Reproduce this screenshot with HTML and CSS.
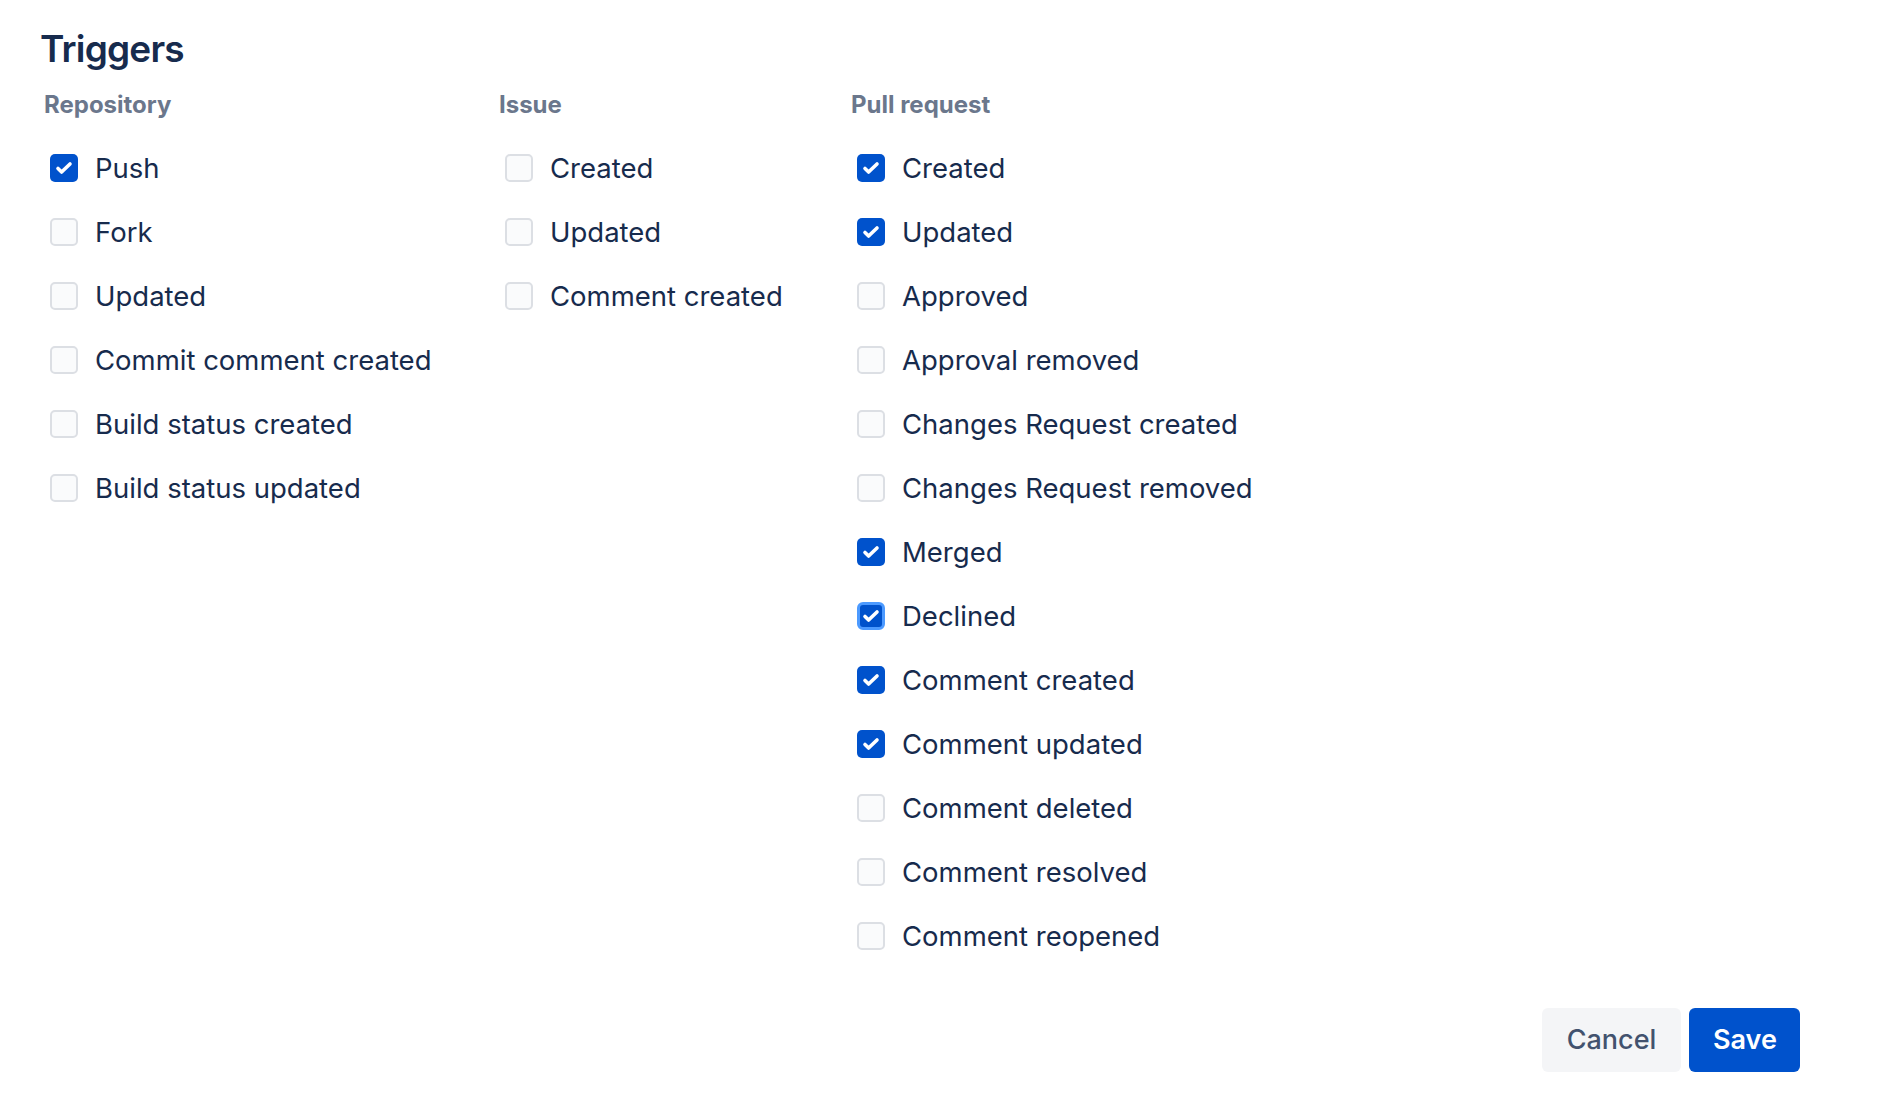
FILE: index.html
```html
<!DOCTYPE html>
<html lang="en">
<head>
<meta charset="utf-8">
<title>Triggers</title>
<link rel="stylesheet" href="styles.css">
</head>
<body>
<svg width="0" height="0" class="defs">
  <defs>
    <symbol id="check" viewBox="0 0 28 28">
      <path d="M8 14.5 L11.6 18 L20 10" fill="none" stroke="#fff" stroke-width="3.6" stroke-linecap="round" stroke-linejoin="round"/>
    </symbol>
  </defs>
</svg>
<main class="page">
  <h1 class="title">Triggers</h1>
  <div class="columns">
    <section class="col col-repo">
      <h2 class="col-heading">Repository</h2>
      <ul class="list">
        <li class="item"><span class="box checked"><svg><use href="#check"/></svg></span><span class="label">Push</span></li>
        <li class="item"><span class="box"></span><span class="label">Fork</span></li>
        <li class="item"><span class="box"></span><span class="label">Updated</span></li>
        <li class="item"><span class="box"></span><span class="label">Commit comment created</span></li>
        <li class="item"><span class="box"></span><span class="label">Build status created</span></li>
        <li class="item"><span class="box"></span><span class="label">Build status updated</span></li>
      </ul>
    </section>
    <section class="col col-issue">
      <h2 class="col-heading">Issue</h2>
      <ul class="list">
        <li class="item"><span class="box"></span><span class="label">Created</span></li>
        <li class="item"><span class="box"></span><span class="label">Updated</span></li>
        <li class="item"><span class="box"></span><span class="label">Comment created</span></li>
      </ul>
    </section>
    <section class="col col-pr">
      <h2 class="col-heading">Pull request</h2>
      <ul class="list">
        <li class="item"><span class="box checked"><svg><use href="#check"/></svg></span><span class="label">Created</span></li>
        <li class="item"><span class="box checked"><svg><use href="#check"/></svg></span><span class="label">Updated</span></li>
        <li class="item"><span class="box"></span><span class="label">Approved</span></li>
        <li class="item"><span class="box"></span><span class="label">Approval removed</span></li>
        <li class="item"><span class="box"></span><span class="label">Changes Request created</span></li>
        <li class="item"><span class="box"></span><span class="label">Changes Request removed</span></li>
        <li class="item"><span class="box checked"><svg><use href="#check"/></svg></span><span class="label">Merged</span></li>
        <li class="item"><span class="box checked focused"><svg><use href="#check"/></svg></span><span class="label">Declined</span></li>
        <li class="item"><span class="box checked"><svg><use href="#check"/></svg></span><span class="label">Comment created</span></li>
        <li class="item"><span class="box checked"><svg><use href="#check"/></svg></span><span class="label">Comment updated</span></li>
        <li class="item"><span class="box"></span><span class="label">Comment deleted</span></li>
        <li class="item"><span class="box"></span><span class="label">Comment resolved</span></li>
        <li class="item"><span class="box"></span><span class="label">Comment reopened</span></li>
      </ul>
    </section>
  </div>
  <div class="actions">
    <button class="btn btn-cancel" type="button">Cancel</button>
    <button class="btn btn-save" type="button">Save</button>
  </div>
</main>
</body>
</html>
```
FILE: styles.css
```css
html, body {
  margin: 0;
  padding: 0;
  background: #ffffff;
}
body {
  font-family: Inter, "Noto Sans", "Liberation Sans", sans-serif;
  color: #172b4d;
}
.defs {
  position: absolute;
  width: 0;
  height: 0;
  overflow: hidden;
}
.page {
  padding: 25px 98px 0 40px;
}
.title {
  margin: 0;
  font-size: 37px;
  line-height: 48px;
  font-weight: 600;
  letter-spacing: -0.8px;
  color: #172b4d;
}
.columns {
  display: grid;
  grid-template-columns: 455px 352px auto;
  margin: 16px 0 0 4px;
}
.col-heading {
  margin: 0 0 15px 0;
  font-size: 24px;
  line-height: 32px;
  font-weight: 650;
  color: #6b778c;
}
.list {
  list-style: none;
  margin: 0;
  padding: 0;
}
.item {
  display: flex;
  align-items: center;
  height: 64px;
  padding-left: 6px;
}
.box {
  box-sizing: border-box;
  flex: none;
  width: 28px;
  height: 28px;
  border: 2px solid #dcdfe4;
  border-radius: 5px;
  background: #fafbfc;
  display: flex;
  align-items: center;
  justify-content: center;
}
.box svg {
  width: 28px;
  height: 28px;
  flex: none;
}
.box.checked {
  border: none;
  background: #0052cc;
}
.box.focused {
  border: 3px solid #4c9aff;
  border-radius: 6px;
}
.label {
  margin-left: 17px;
  font-size: 27.5px;
  line-height: 32px;
  font-weight: 400;
  color: #172b4d;
  white-space: nowrap;
}
.actions {
  display: flex;
  justify-content: flex-end;
  gap: 8px;
  margin-top: 40px;
}
.btn {
  font-family: Inter, "Noto Sans", "Liberation Sans", sans-serif;
  height: 64px;
  padding: 0 24px;
  border: none;
  border-radius: 6px;
  font-size: 27px;
  line-height: 64px;
}
.btn-cancel {
  background: #f4f5f7;
  color: #42526e;
  font-weight: 500;
  width: 139px;
}
.btn-save {
  background: #0052cc;
  color: #ffffff;
  font-weight: 600;
  width: 111px;
}
```
